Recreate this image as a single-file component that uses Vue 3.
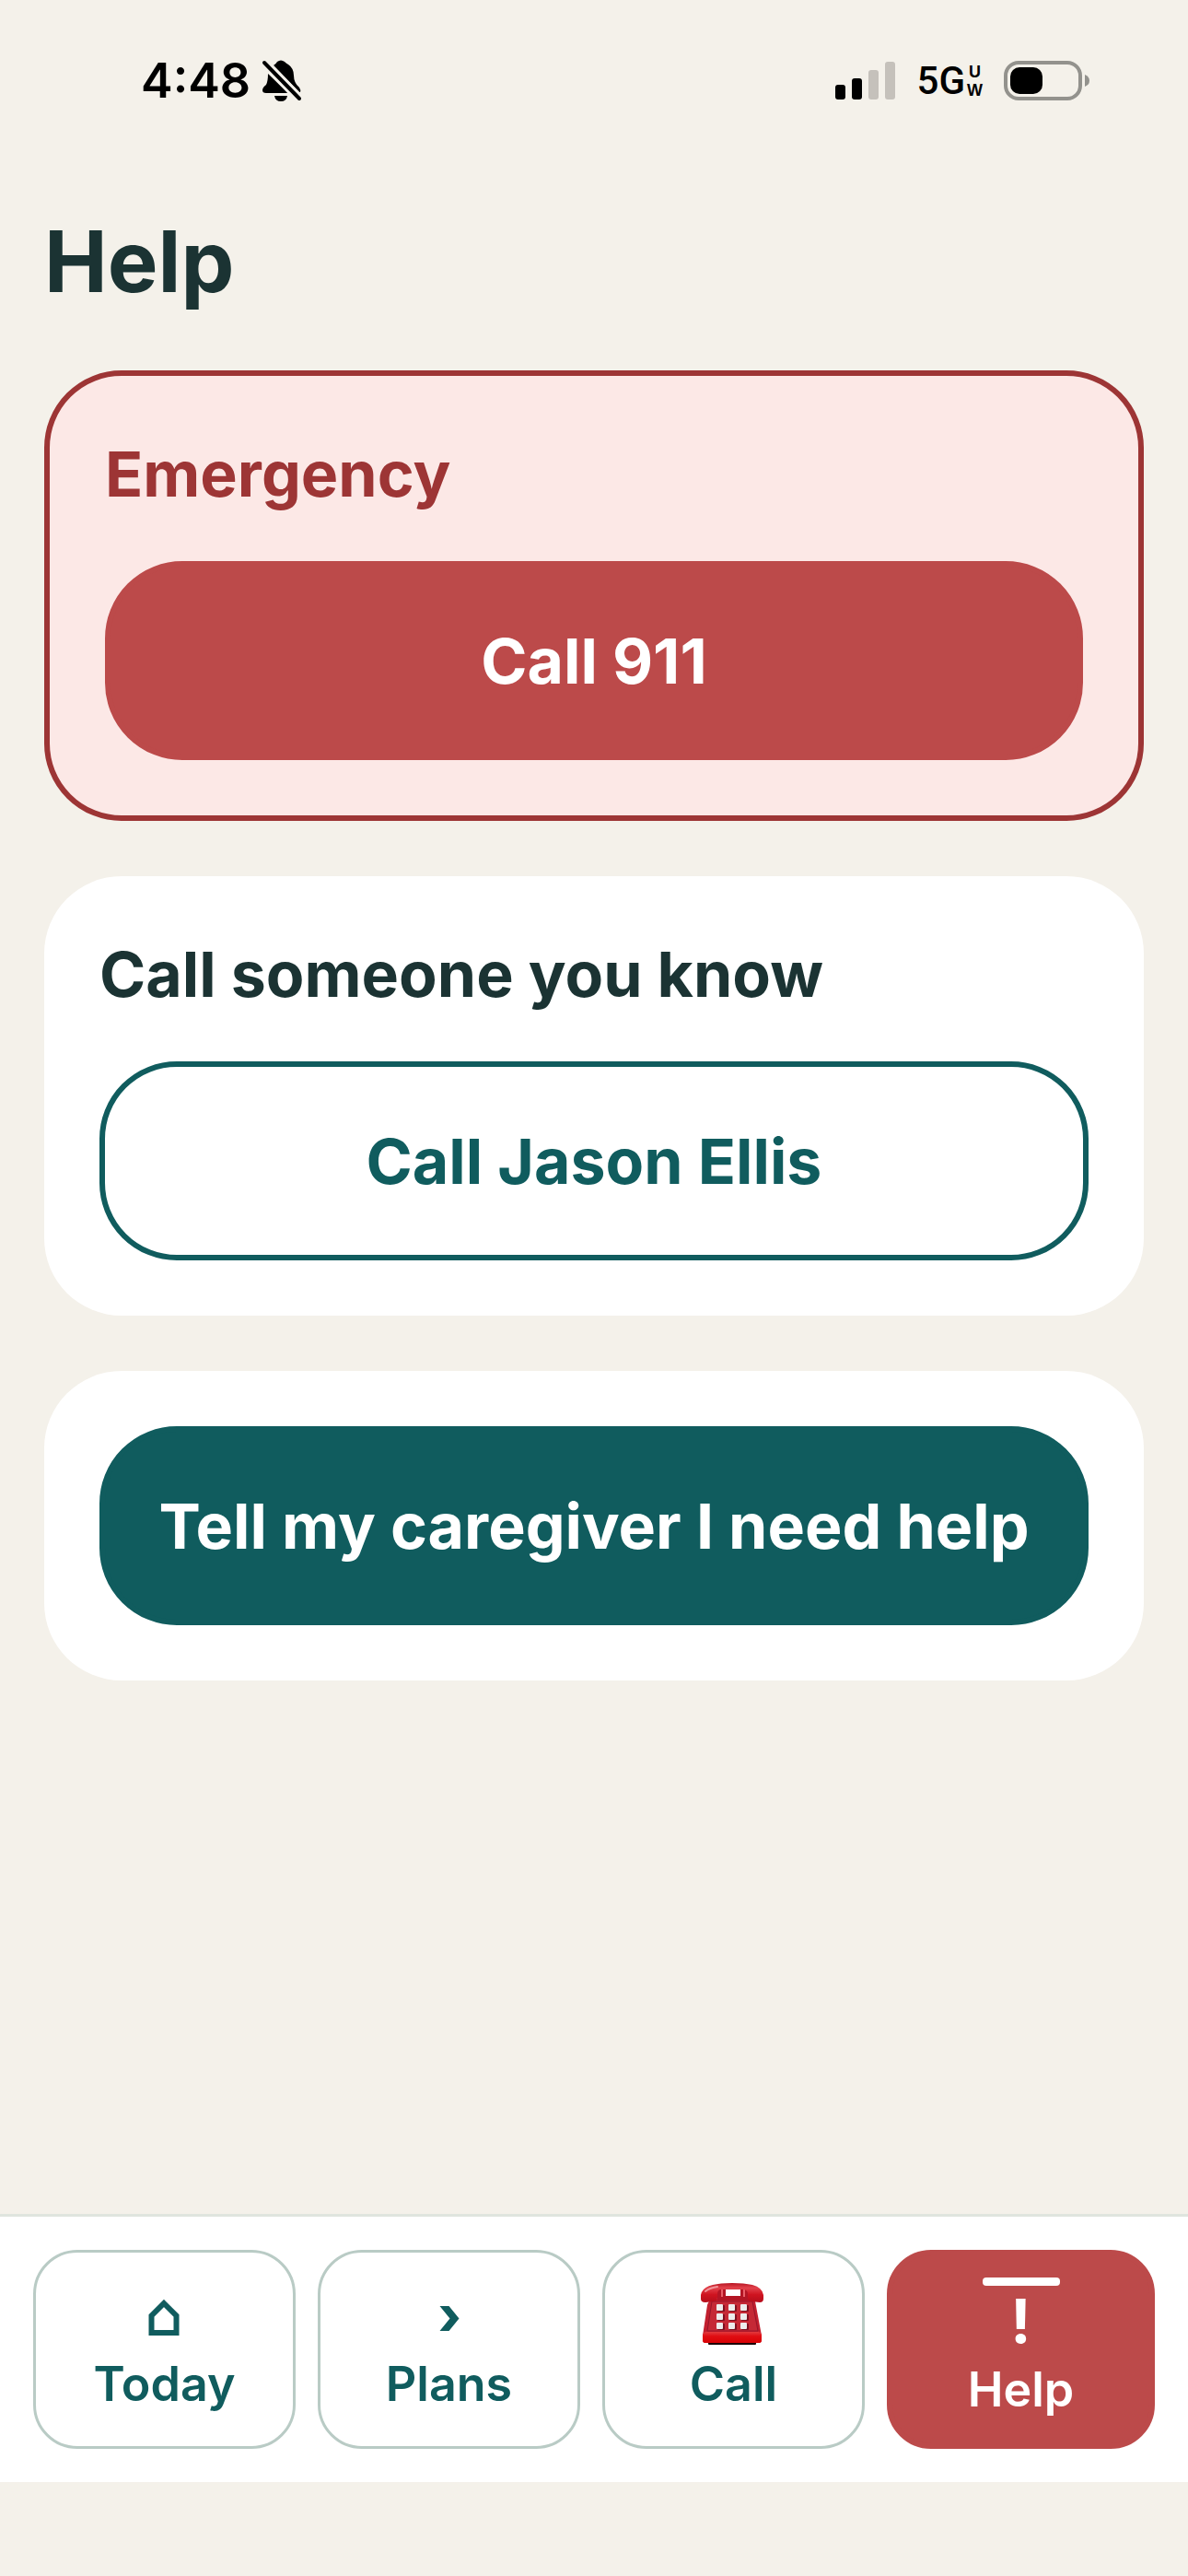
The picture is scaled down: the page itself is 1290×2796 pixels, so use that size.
<script setup>
const contacts = [{ name: 'Jason Ellis' }]
const digits = [0, 1, 2, 3, 4, 5, 6, 7, 8]
const tabs = [
  { id: 'today', label: 'Today' },
  { id: 'plans', label: 'Plans' },
  { id: 'call', label: 'Call' },
  { id: 'help', label: 'Help' },
]
const current = 'help'
</script>

<template>
  <div class="screen">
    <header class="status">
      <div class="status-side">
        <span class="time">4:48</span>
        <svg class="bell" width="44" height="48" viewBox="0 0 44 48" aria-label="Silent mode">
          <path d="M13 7Q16 5 17 3Q21 0 25 3Q27 5 29 6Q35 10 35 18Q35 26 41 31Q43 34 42 36L41 36Z" />
          <path d="M7 16L29 37H5Q1 37 1 34Q1 31 5 28Q7 24 7 16Z" />
          <path d="M14 40H28Q27 46 21 46Q15 46 14 40Z" />
          <path d="M3 4L41 43" class="slash-gap" />
          <path d="M3 4L41 43" class="slash" />
        </svg>
      </div>
      <div class="status-side right">
        <svg width="66" height="42" viewBox="0 0 66 42" aria-label="Signal strength">
          <rect x="0" y="25" width="11" height="16" rx="3" />
          <rect x="18" y="18" width="11" height="23" rx="3" />
          <rect x="36" y="9" width="11" height="32" rx="3" class="off" />
          <rect x="54" y="0" width="11" height="41" rx="3" class="off" />
        </svg>
        <span class="network">
          <span class="generation">5G</span>
          <span class="band"><span>U</span><span>W</span></span>
        </span>
        <svg width="94" height="44" viewBox="0 0 94 44" aria-label="Battery">
          <rect x="2" y="2" width="81" height="39" rx="14" class="case" />
          <rect x="7" y="7" width="35" height="29" rx="10" />
          <path d="M88 15Q93 17 93 21.500Q93 26 88 28Z" class="nub" />
        </svg>
      </div>
    </header>

    <main class="content">
      <h1>Help</h1>

      <section class="card emergency">
        <h2>Emergency</h2>
        <button type="button" class="action danger">Call 911</button>
      </section>

      <section class="card">
        <h2>Call someone you know</h2>
        <button v-for="c in contacts" :key="c.name" type="button" class="action outline">
          Call {{ c.name }}
        </button>
      </section>

      <section class="card">
        <button type="button" class="action primary">Tell my caregiver I need help</button>
      </section>
    </main>

    <nav class="tabs">
      <button
        v-for="t in tabs"
        :key="t.id"
        type="button"
        class="tab"
        :class="{ active: t.id === current }"
        :aria-current="t.id === current ? 'page' : undefined"
      >
        <span v-if="t.id === current" class="marker"></span>
        <svg v-if="t.id === 'today'" class="icon" viewBox="0 0 76 76" aria-hidden="true">
          <path d="M37 22L50.500 35.500V54H23.500V35.500Z" class="house" />
        </svg>
        <svg v-else-if="t.id === 'plans'" class="icon" viewBox="0 0 76 76" aria-hidden="true">
          <path d="M27.500 25H37.500L48.500 38.500L37.500 52H27.500L38.500 38.500Z" fill="currentColor" />
        </svg>
        <svg v-else-if="t.id === 'call'" class="icon" viewBox="2 0 76 76" aria-hidden="true">
          <defs>
            <linearGradient id="handset" x1="0" y1="0" x2="0" y2="1">
              <stop offset="0" stop-color="#b81422" />
              <stop offset="0.25" stop-color="#e2424c" />
              <stop offset="0.6" stop-color="#cf1420" />
              <stop offset="1" stop-color="#b50d1b" />
            </linearGradient>
            <linearGradient id="base" x1="0" y1="0" x2="0" y2="1">
              <stop offset="0" stop-color="#e23a3e" />
              <stop offset="0.4" stop-color="#e00d12" />
              <stop offset="1" stop-color="#d80205" />
            </linearGradient>
          </defs>
          <rect x="12" y="63" width="52" height="4" rx="1" fill="#1c0709" />
          <path d="M15 19Q17 17 22 17H54Q62 17 63 20L70 57V62Q70 65 67 65H9Q6 65 6 62V57L11 24Q12 20 15 19Z" fill="#c2202f" />
          <path d="M22 6H31V14H47V6H56V19H22Z" fill="#b31524" />
          <path d="M27 7V15M51 7V15" stroke="#ea6068" stroke-width="2" />
          <path d="M16 20H60L66 52H11Z" fill="#c52936" stroke="#97152a" stroke-width="1" />
          <path d="M6 56Q7 53 10 53H66Q69 53 70 56V62Q70 65 67 65H9Q6 65 6 62Z" fill="url(#base)" />
          <path d="M4 13Q5 5 17 2Q25 0 38 0Q51 0 60 2Q71 5 72 13V17Q72 21 68 21L59 20Q55 20 55 16V12Q55 8 51 7H25Q22 8 22 12V16Q22 20 18 20L9 21Q4 21 4 17Z" fill="url(#handset)" />
          <path d="M9 9Q14 5 22 4" stroke="#f0959a" stroke-width="2" fill="none" stroke-linecap="round" />
          <g v-for="n in digits" :key="n">
            <rect :x="22 + (n % 3) * 13" :y="24 + Math.floor(n / 3) * 10" width="8" height="7" rx="1" fill="#7d1020" />
            <rect :x="21 + (n % 3) * 13" :y="23 + Math.floor(n / 3) * 10" width="7" height="7" rx="1" fill="#ededed" />
          </g>
        </svg>
        <span v-else class="bang" aria-hidden="true">!</span>
        <span class="label">{{ t.label }}</span>
      </button>
    </nav>
  </div>
</template>

<style>
body {
  margin: 0;
  background: #f4f1ea;
}
</style>

<style scoped>
.screen {
  box-sizing: border-box;
  min-height: 100vh;
  padding-bottom: 102px;
  display: flex;
  flex-direction: column;
  background: #f4f1ea;
  color: #1b3333;
  font-family: Inter, "Liberation Sans", sans-serif;
}

.status {
  display: flex;
  justify-content: space-between;
  align-items: center;
  height: 64px;
  padding: 56px 106px 0 153px;
  color: #000;
}

.status-side {
  display: flex;
  align-items: center;
  gap: 12px;
}

.right {
  gap: 23px;
}

.time {
  font-size: 52px;
  font-weight: 600;
  line-height: 64px;
}

.slash {
  stroke: #000;
  stroke-width: 4;
  stroke-linecap: round;
}

.slash-gap {
  stroke: #f4f1ea;
  stroke-width: 10;
}

.off {
  fill: #c5c1bb;
}

.case {
  fill: none;
  stroke: #93928d;
  stroke-width: 4;
}

.nub {
  fill: #93928d;
}

.network {
  display: flex;
  align-items: center;
  gap: 2px;
}

.generation {
  font-family: Roboto, sans-serif;
  font-size: 42px;
  font-weight: 500;
  line-height: 48px;
}

.band {
  display: flex;
  flex-direction: column;
  align-items: center;
  font-family: "Liberation Sans", sans-serif;
  font-size: 18px;
  font-weight: 700;
  line-height: 20px;
}

.content {
  flex: 1;
  display: flex;
  flex-direction: column;
  gap: 60px;
  padding: 106px 48px 60px;
}

h1,
h2 {
  margin: 0;
  font-weight: 700;
}

h1 {
  font-size: 92px;
  line-height: 116px;
}

h2 {
  font-size: 68px;
  line-height: 93px;
}

.card {
  display: flex;
  flex-direction: column;
  gap: 48px;
  padding: 60px;
  border-radius: 84px;
  background: #fff;
}

.emergency {
  border: 6px solid #9d3535;
  background: #fce8e6;
}

.emergency h2 {
  color: #9d3535;
}

.action {
  min-height: 216px;
  padding: 0;
  border: 6px solid transparent;
  border-radius: 84px;
  font: inherit;
  font-size: 68px;
  font-weight: 700;
}

.danger {
  border-color: #bc4a4a;
  background: #bc4a4a;
  color: #fff;
}

.outline {
  border-color: #105c5e;
  background: #fff;
  color: #105c5e;
}

.primary {
  border-color: #105c5e;
  background: #105c5e;
  color: #fff;
}

.tabs {
  display: flex;
  gap: 24px;
  padding: 36px;
  border-top: 3px solid #dfe5de;
  background: #fff;
}

.tab {
  flex: 1 1 0;
  min-width: 0;
  min-height: 216px;
  padding: 0;
  display: flex;
  flex-direction: column;
  align-items: center;
  justify-content: center;
  border: 3px solid #b9cbc5;
  border-radius: 48px;
  background: #fff;
  color: #105c5e;
  font: inherit;
}

.active {
  border: 6px solid #bc4a4a;
  background: #bc4a4a;
  color: #fff;
}

.marker {
  width: 84px;
  height: 9px;
  border-radius: 4px;
  background: #fff;
}

.icon {
  width: 76px;
  height: 76px;
}

.house {
  fill: none;
  stroke: currentColor;
  stroke-width: 6;
}

.bang {
  margin-bottom: 3px;
  font-size: 66px;
  font-weight: 700;
  line-height: 76px;
}

.label {
  font-size: 52px;
  font-weight: 600;
  line-height: 68px;
}
</style>
